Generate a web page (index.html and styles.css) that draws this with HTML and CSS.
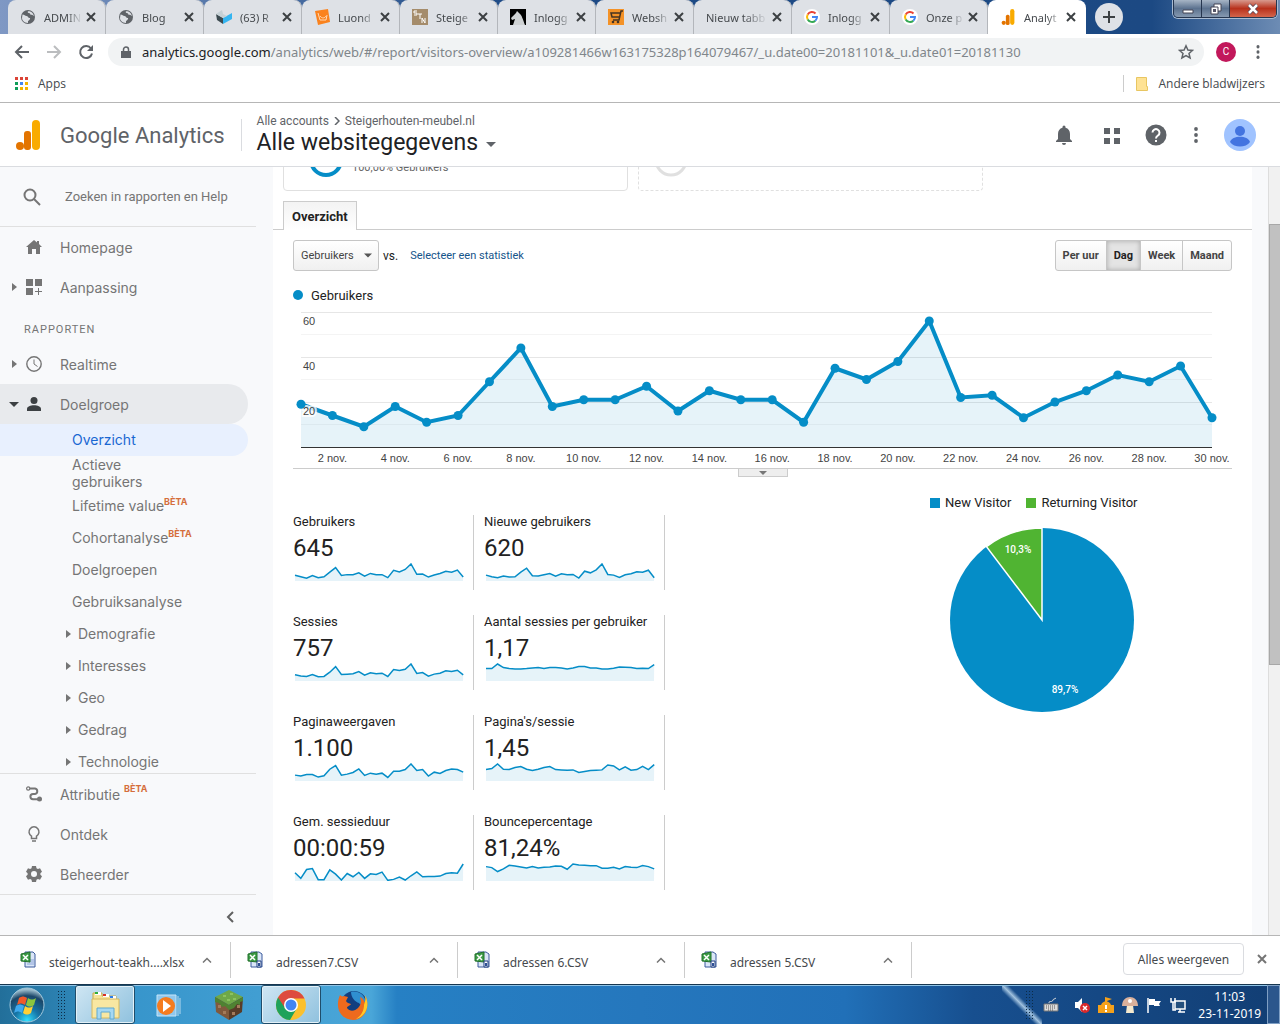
FILE: index.html
```html
<!DOCTYPE html>
<html lang="nl">
<head>
    <meta charset="UTF-8">
    <meta name="viewport" content="width=device-width, initial-scale=1.0">
    <title>Analytics</title>
    <link rel="stylesheet" href="styles.css">
</head>
<body>

    <!-- Shared icons -->
    <svg class="sprite" aria-hidden="true">
        <symbol id="close" viewBox="0 0 10 10"><path d="M1 1l8 8M9 1l-8 8" fill="none" stroke="currentColor" stroke-width="2"/></symbol>
        <symbol id="globe" viewBox="0 0 16 16"><circle cx="8" cy="8" r="7" fill="#5f6368"/><path d="M2.500 5.500c2 0 2.500 1.500 4 1.500s1.500 2 3 2-0 2.500-1.500 3v2c-4 0-6-3-6-5zM8 2.200c-1 1.300.5 1.800 1.500 2s.5 1.800 2 1.600 1.300 1.200 2.300 1.200c-.3-3-3-5-5.800-4.800z" fill="#dee1e6"/></symbol>
        <symbol id="google" viewBox="0 0 16 16"><circle cx="8" cy="8" r="8" fill="#fff"/><g fill="none" stroke-width="2"><path d="M11.500 4.500A5 5 0 0 0 3.700 5.500" stroke="#ea4335"/><path d="M3.700 5.500a5 5 0 0 0 0 5" stroke="#fbbc05"/><path d="M3.700 10.500a5 5 0 0 0 7.600 1.200" stroke="#34a853"/><path d="M11.300 11.700A5 5 0 0 0 13 8H8" stroke="#4285f4"/></g></symbol>
        <symbol id="analytics" viewBox="0 0 24 30"><rect x="16" y="0" width="8" height="30" rx="4" fill="#f9ab00"/><rect x="8" y="11" width="7" height="19" rx="3" fill="#e37400"/><circle cx="4" cy="26" r="4" fill="#e37400"/></symbol>
        <symbol id="right" viewBox="0 0 5 8"><path d="M0 0l5 4-5 4z" fill="currentColor"/></symbol>
        <symbol id="down" viewBox="0 0 10 5"><path d="M0 0h10l-5 5z" fill="currentColor"/></symbol>
        <symbol id="up" viewBox="0 0 10 6"><path d="M1 5.500l4-4 4 4" fill="none" stroke="currentColor" stroke-width="1.500"/></symbol>
        <symbol id="dots" viewBox="0 0 4 16"><circle cx="2" cy="2" r="1.900"/><circle cx="2" cy="8" r="1.900"/><circle cx="2" cy="14" r="1.900"/></symbol>
        <symbol id="excel" viewBox="0 0 16 18"><path d="M5 1h8l2 2v13H5z" fill="#dbe6f8" stroke="#3a5a9c"/><path d="M9 9h5M9 11h5M7 13h7" stroke="#8aa4d6"/><path d="M1 3l9-2v10l-9-1z" fill="#3d9c47" stroke="#23702c"/><path d="M3 4l5 5M8 4L3 9" stroke="#fff" stroke-width="1.500"/></symbol>
        <symbol id="csv" viewBox="0 0 16 18"><path d="M4 1h8l3 2v13H4z" fill="#dbe6f8" stroke="#3a5a9c"/><path d="M1 3l9-2v10l-9-1z" fill="#3d9c47" stroke="#23702c"/><path d="M3 4l5 5M8 4L3 9" stroke="#fff" stroke-width="1.500"/><path d="M10 10h4v6h-4z" fill="#fff" stroke="#1d3d80"/><path d="M11 12h2v3h-2z" fill="#2d4f94"/></symbol>
    </svg>

    <!-- Browser tabs -->
    <div class="tabstrip">
        <div class="tab"><svg class="favicon"><use href="#globe"/></svg><span class="tab-title">ADMIN</span><button class="tab-close" aria-label="Sluiten"><svg><use href="#close"/></svg></button></div>
        <div class="tab"><svg class="favicon"><use href="#globe"/></svg><span class="tab-title">Blog</span><button class="tab-close" aria-label="Sluiten"><svg><use href="#close"/></svg></button></div>
        <div class="tab"><svg class="favicon" viewBox="0 0 16 16"><path d="M0 5l7 4v6L1 11z" fill="#3c4a50"/><path d="M7 9l9-5v6l-9 5z" fill="#35b5f1"/><path d="M0 5l6-4 1 4 4 2-4 2z" fill="#c5d0d5"/></svg><span class="tab-title">(63) R</span><button class="tab-close" aria-label="Sluiten"><svg><use href="#close"/></svg></button></div>
        <div class="tab"><svg class="favicon" viewBox="0 0 16 16"><path d="M1 2l13-2 2 13-12 3z" fill="#fa821e"/><path d="M4 4l2 7h6l1-5M6 7c2 3 5 2 6 0" fill="none" stroke="#ffd9b5"/></svg><span class="tab-title">Luond</span><button class="tab-close" aria-label="Sluiten"><svg><use href="#close"/></svg></button></div>
        <div class="tab"><svg class="favicon" viewBox="0 0 16 16"><path d="M0 0h16v16H0z" fill="#a58c6b"/><path d="M5 2H2v2h3v2H2M6 5h4M8 5v5M10 14V9l3 5V9" fill="none" stroke="#fff"/></svg><span class="tab-title">Steige</span><button class="tab-close" aria-label="Sluiten"><svg><use href="#close"/></svg></button></div>
        <div class="tab"><svg class="favicon" viewBox="0 0 16 16"><path d="M0 0h16v16H0z" fill="#000"/><path d="M3 16l2-6-3 1-1-2 5-5 1-2 2 2c3 2 4 7 6 12z" fill="#cfd2d4"/></svg><span class="tab-title">Inlogg</span><button class="tab-close" aria-label="Sluiten"><svg><use href="#close"/></svg></button></div>
        <div class="tab"><svg class="favicon" viewBox="0 0 16 16"><path d="M0 0h16v16H0z" fill="#f49227"/><path d="M15 2h-2l-2 9H5M13 4H3l1 4h8" fill="none" stroke="#463322" stroke-width="1.500"/><circle cx="5" cy="13" r="1.300" fill="#463322"/><circle cx="10" cy="13" r="1.300" fill="#463322"/></svg><span class="tab-title">Websh</span><button class="tab-close" aria-label="Sluiten"><svg><use href="#close"/></svg></button></div>
        <div class="tab"><span class="tab-title">Nieuw tabb</span><button class="tab-close" aria-label="Sluiten"><svg><use href="#close"/></svg></button></div>
        <div class="tab"><svg class="favicon"><use href="#google"/></svg><span class="tab-title">Inlogg</span><button class="tab-close" aria-label="Sluiten"><svg><use href="#close"/></svg></button></div>
        <div class="tab"><svg class="favicon"><use href="#google"/></svg><span class="tab-title">Onze p</span><button class="tab-close" aria-label="Sluiten"><svg><use href="#close"/></svg></button></div>
        <div class="tab active"><svg class="favicon"><use href="#analytics"/></svg><span class="tab-title">Analyt</span><button class="tab-close" aria-label="Sluiten"><svg><use href="#close"/></svg></button></div>
        <button class="new-tab" aria-label="Nieuw tabblad"><svg viewBox="0 0 12 12"><path d="M6 0v12M0 6h12" stroke="#3c4043" stroke-width="2"/></svg></button>
        <div class="window-buttons">
            <button aria-label="Minimaliseren"><svg viewBox="0 0 12 12"><path d="M1 7h10v3H1z" fill="#fff" stroke="#445"/></svg></button>
            <button aria-label="Verkleinen"><svg viewBox="0 0 12 12"><path d="M4 1h7v7H4z" fill="#fff" stroke="#445"/><path d="M1 4h7v7H1z" fill="#fff" stroke="#445"/><path d="M3 6h3v3H3z" fill="#556"/></svg></button>
            <button class="window-close" aria-label="Venster sluiten"><svg viewBox="0 0 12 12"><path d="M2 2l8 8M10 2l-8 8" stroke="#545" stroke-width="4"/><path d="M2 2l8 8M10 2l-8 8" stroke="#fff" stroke-width="2.500"/></svg></button>
        </div>
    </div>

    <!-- Address bar -->
    <div class="toolbar">
        <button class="nav-button" aria-label="Terug"><svg viewBox="0 0 16 16"><path d="M15 8H2M8 2L2 8l6 6" fill="none" stroke="#5f6368" stroke-width="2"/></svg></button>
        <button class="nav-button" aria-label="Vooruit"><svg viewBox="0 0 16 16"><path d="M1 8h13M8 2l6 6-6 6" fill="none" stroke="#bbbdbf" stroke-width="2"/></svg></button>
        <button class="nav-button" aria-label="Vernieuwen"><svg viewBox="0 0 16 16"><path d="M13 4.500A6 6 0 1 0 14 9.500" fill="none" stroke="#5f6368" stroke-width="2"/><path d="M15 1v6H9z" fill="#5f6368"/></svg></button>
        <div class="omnibox">
            <svg class="lock" viewBox="0 0 10 12"><path d="M0 5h10v7H0z" fill="#5f6368"/><path d="M2.500 5V3.500a2.500 2.500 0 0 1 5 0V5" fill="none" stroke="#5f6368" stroke-width="1.500"/></svg>
            <span class="url"><b>analytics.google.com</b>/analytics/web/#/report/visitors-overview/a109281466w163175328p164079467/_u.date00=20181101&amp;_u.date01=20181130</span>
            <svg class="star" viewBox="0 0 16 16"><path d="M8 1.800l1.900 4.200 4.600.4-3.500 3 1.100 4.600L8 11.600 3.900 14 5 9.400 1.500 6.400l4.600-.4z" fill="none" stroke="#5f6368" stroke-width="1.500"/></svg>
        </div>
        <span class="profile">C</span>
        <button class="menu-button" aria-label="Menu"><svg viewBox="0 0 4 16"><use href="#dots"/></svg></button>
    </div>

    <div class="bookmarks">
        <svg class="apps" viewBox="0 0 13 13"><path d="M0 0h3v3H0zM5 0h3v3H5zM10 0h3v3h-3z" fill="#db4437"/><path d="M0 5h3v3H0zM0 10h3v3H0z" fill="#0f9d58"/><path d="M5 5h3v3H5z" fill="#4285f4"/><path d="M10 5h3v3h-3zM5 10h3v3H5zM10 10h3v3h-3z" fill="#f4b400"/></svg>
        <a href="#">Apps</a>
        <a class="other" href="#"><svg viewBox="0 0 12 14"><path d="M.5.500h10v9h1v4H.500z" fill="#fee294" stroke="#e8c662"/></svg>Andere bladwijzers</a>
    </div>

    <!-- Analytics header -->
    <header class="header">
        <svg class="logo"><use href="#analytics"/></svg>
        <span class="brand">Google Analytics</span>
        <span class="divider"></span>
        <div class="account">
            <div class="breadcrumb">Alle accounts <svg viewBox="0 0 6 8"><path d="M1 0l4 4-4 4" fill="none" stroke="#5f6368" stroke-width="1.500"/></svg> Steigerhouten-meubel.nl</div>
            <h1>Alle websitegegevens <svg><use href="#down"/></svg></h1>
        </div>
        <div class="header-icons">
            <svg class="bell" viewBox="0 0 24 24"><path d="M12 22a2 2 0 0 0 2-2h-4a2 2 0 0 0 2 2zm6-6v-5c0-3.100-1.600-5.600-4.500-6.300V4a1.500 1.500 0 0 0-3 0v.7C7.600 5.400 6 7.900 6 11v5l-2 2v1h16v-1z"/></svg>
            <svg viewBox="0 0 24 24"><path d="M4 5h6v6H4zM14 5h6v6h-6zM4 15h6v6H4zM14 15h6v6h-6z"/></svg>
            <svg viewBox="0 0 24 24"><circle cx="12" cy="12" r="10.500"/><path d="M8.500 9.500a3.500 3.500 0 1 1 5.500 3c-1.300 1-2 1.500-2 3" fill="none" stroke="#fff" stroke-width="2"/><path d="M11 17h2v2h-2z" fill="#fff"/></svg>
            <svg class="more" viewBox="-10 -4 24 24"><use href="#dots" width="4" height="16"/></svg>
            <svg class="avatar" viewBox="0 0 32 32"><circle cx="16" cy="16" r="16" fill="#a0c3ff"/><circle cx="16" cy="12" r="5" fill="#4374e0"/><path d="M6 23c2-7 18-7 20 0-4 6-16 6-20 0z" fill="#4374e0"/></svg>
        </div>
    </header>

    <div class="layout">
        <aside class="sidebar">
            <label class="search">
                <svg viewBox="0 0 18 18"><circle cx="7" cy="7" r="5.500" fill="none" stroke="#757575" stroke-width="2"/><path d="M11 11l6 6" stroke="#757575" stroke-width="2"/></svg>
                <input type="text" placeholder="Zoeken in rapporten en Help" aria-label="Zoeken">
            </label>
            <nav class="nav">
                <a class="item" href="#"><span class="arrow"></span><svg viewBox="0 0 16 16"><path d="M8 1L0 8h2v7h4v-5h4v5h4V8h2l-3-3V2h-2v1.500z"/></svg>Homepage</a>
                <a class="item" href="#"><span class="arrow"><svg><use href="#right"/></svg></span><svg viewBox="0 0 16 16"><path d="M0 0h7v7H0zM9 0h7v7H9zM0 9h7v7H0zM12 9h1v3h3v1h-3v3h-1v-3H9v-1h3z"/></svg>Aanpassing</a>
                <h2>RAPPORTEN</h2>
                <a class="item" href="#"><span class="arrow"><svg><use href="#right"/></svg></span><svg viewBox="0 0 16 16"><circle cx="8" cy="8" r="7.200" fill="none" stroke="currentColor" stroke-width="1.400"/><path d="M8 3.500V8l3.500 2.500" fill="none" stroke="currentColor"/></svg>Realtime</a>
                <a class="item open" href="#"><span class="arrow"><svg class="wide"><use href="#down"/></svg></span><svg viewBox="0 0 16 16"><circle cx="8" cy="4.500" r="3.500"/><path d="M1 15v-2c0-5 14-5 14 0v2z"/></svg><span>Doelgroep</span></a>
                <a class="sub selected" href="#">Overzicht</a>
                <a class="sub tall" href="#">Actieve gebruikers</a>
                <a class="sub" href="#">Lifetime value<sup>BÈTA</sup></a>
                <a class="sub" href="#">Cohortanalyse<sup>BÈTA</sup></a>
                <a class="sub" href="#">Doelgroepen</a>
                <a class="sub" href="#">Gebruiksanalyse</a>
                <a class="sub group" href="#"><svg><use href="#right"/></svg>Demografie</a>
                <a class="sub group" href="#"><svg><use href="#right"/></svg>Interesses</a>
                <a class="sub group" href="#"><svg><use href="#right"/></svg>Geo</a>
                <a class="sub group" href="#"><svg><use href="#right"/></svg>Gedrag</a>
                <a class="sub group" href="#"><svg><use href="#right"/></svg>Technologie</a>
            </nav>
            <div class="nav-bottom">
                <a class="item" href="#"><span class="arrow"></span><svg viewBox="0 0 16 16"><path d="M4 2.500h5a2.800 2.800 0 0 1 0 5.500H7a2.600 2.600 0 0 0 0 5.200h5" fill="none" stroke="currentColor" stroke-width="2"/><circle cx="2.200" cy="2.500" r="1.600" fill="none" stroke="currentColor" stroke-width="1.200"/><circle cx="13.500" cy="13" r="2.500"/></svg>Attributie&nbsp;<sup>BÈTA</sup></a>
                <a class="item" href="#"><span class="arrow"></span><svg viewBox="0 0 16 16"><path d="M5.500 12.500v-2.300a5 5 0 1 1 5 0v2.300z" fill="none" stroke="currentColor" stroke-width="1.500"/><path d="M6 15h4" stroke="currentColor" stroke-width="1.500"/></svg>Ontdek</a>
                <a class="item" href="#"><span class="arrow"></span><svg viewBox="0 0 16 16"><path fill-rule="evenodd" d="M6 0h4l.5 2.200 1.400.8 2.100-.7 2 3.400L14.400 7.200v1.600L16 10.300l-2 3.400-2.100-.7-1.400.8L10 16H6l-.5-2.200-1.400-.8-2.100.7-2-3.400 1.600-1.500V7.200L0 5.700l2-3.400 2.100.7 1.400-.8zM8 5a3 3 0 1 0 0 6 3 3 0 0 0 0-6z"/></svg>Beheerder</a>
            </div>
            <button class="collapse" aria-label="Inklappen"><svg viewBox="0 0 8 12"><path d="M7 1L2 6l5 5" fill="none" stroke="#616161" stroke-width="2"/></svg></button>
        </aside>

        <main class="report">
            <div class="segments">
                <div class="segment"><svg viewBox="0 0 36 36"><circle cx="18" cy="18" r="15" fill="none" stroke="#058dc7" stroke-width="4"/></svg>100,00% Gebruikers</div>
                <div class="segment empty"><svg viewBox="0 0 36 36"><circle cx="18" cy="18" r="15" fill="none" stroke="#e0e0e0" stroke-width="3"/></svg></div>
            </div>

            <div class="report-tabs"><button>Overzicht</button></div>

            <div class="content">
                <div class="controls">
                    <span class="select"><select aria-label="Statistiek"><option>Gebruikers</option></select><svg><use href="#down"/></svg></span>
                    <span>vs.</span>
                    <a href="#">Selecteer een statistiek</a>
                    <div class="range">
                        <button>Per uur</button><button class="on">Dag</button><button>Week</button><button>Maand</button>
                    </div>
                </div>

                <div class="legend"><i></i>Gebruikers</div>
                <svg class="chart" id="chart" viewBox="0 0 939 156"></svg>
                <div class="chart-foot"><button aria-label="Notities"><svg><use href="#down"/></svg></button></div>

                <div class="summary">
                    <div class="metrics" id="metrics"></div>
                    <figure class="visitors">
                        <figcaption><i></i>New Visitor <i class="green"></i>Returning Visitor</figcaption>
                        <svg viewBox="0 0 184 184">
                            <circle cx="92" cy="92" r="92" fill="#058dc7"/>
                            <path d="M92 92V0A92 92 0 0 0 36.500 18.600z" fill="#50b432" stroke="#fff" stroke-width="1.500"/>
                            <text x="68" y="25">10,3%</text>
                            <text x="115" y="165">89,7%</text>
                        </svg>
                    </figure>
                </div>
            </div>
        </main>

        <div class="scrollbar"><div class="thumb"></div></div>
    </div>

    <!-- Downloads -->
    <div class="downloads">
        <div class="download"><svg class="file"><use href="#excel"/></svg><span>steigerhout-teakh....xlsx</span><button aria-label="Opties"><svg><use href="#up"/></svg></button></div>
        <div class="download"><svg class="file"><use href="#csv"/></svg><span>adressen7.CSV</span><button aria-label="Opties"><svg><use href="#up"/></svg></button></div>
        <div class="download"><svg class="file"><use href="#csv"/></svg><span>adressen 6.CSV</span><button aria-label="Opties"><svg><use href="#up"/></svg></button></div>
        <div class="download"><svg class="file"><use href="#csv"/></svg><span>adressen 5.CSV</span><button aria-label="Opties"><svg><use href="#up"/></svg></button></div>
        <button class="show-all">Alles weergeven</button>
        <button class="close-bar" aria-label="Sluiten"><svg><use href="#close"/></svg></button>
    </div>

    <!-- Taskbar -->
    <div class="taskbar">
        <button class="start" aria-label="Start"><svg viewBox="0 0 38 38">
            <defs><radialGradient id="orb" cx=".5" cy=".95" r=".9"><stop offset="0" stop-color="#2fe0ff"/><stop offset=".4" stop-color="#1676a8"/><stop offset=".8" stop-color="#1b4668"/><stop offset="1" stop-color="#9bbccc"/></radialGradient></defs>
            <circle cx="19" cy="19" r="17" fill="url(#orb)" stroke="#a4c9dc"/>
            <path d="M11 12c3-2 5-2 8 0l-2 7c-3-2-5-2-8 0z" fill="#f0592a"/><path d="M20 12c3 2 5 2 8 0l-2 7c-3 2-5 2-8 0z" fill="#8cc63e"/><path d="M8 20c3-2 5-2 8 0l-2 7c-3-2-5-2-8 0z" fill="#3fa9ee"/><path d="M17 20c3 2 5 2 8 0l-2 7c-3 2-5 2-8 0z" fill="#ffd034"/></svg></button>
        <span class="grip"></span>
        <button class="task open" aria-label="Verkenner"><svg viewBox="0 0 32 32"><path d="M4 4h9v3h14v20H4z" fill="#f5e39a" stroke="#c9a94a"/><path d="M6 3h6v3H6zM14 5h6v3h-6zM21 7h6v3h-6z" fill="#fff"/><path d="M6 3h3v2H6z" fill="#2fae3b"/><path d="M14 5h3v2h-3z" fill="#d93025"/><path d="M21 7h3v2h-3z" fill="#2b7de9"/><path d="M3 10h27v19H3z" fill="#f8e7a2" stroke="#d6b85c"/><path d="M8 30V19h17v11h-4v-7h-9v7z" fill="#a5d8f2" stroke="#5fa9d2"/></svg></button>
        <button class="task" aria-label="Media Player"><svg viewBox="0 0 32 32"><path d="M6 6h19v21H6z" fill="#8fc8ee" stroke="#c7e5f8"/><path d="M27 7v20M29 9v16" stroke="#b5d9f0"/><circle cx="15" cy="17" r="9" fill="#f57c1f"/><path d="M12 11l8 6-8 6z" fill="#fff"/></svg></button>
        <button class="task" aria-label="Minecraft"><svg viewBox="0 0 32 32"><path d="M16 1l14 7-14 8L2 8z" fill="#6fa848"/><path d="M2 8l14 8v15L3 23z" fill="#80593d"/><path d="M30 8l-14 8v15l13-8z" fill="#593c28"/><path d="M2 8l14 8 14-8v4l-3 1v3l-3-1-3 4-5 2-4-4-3 1-3-4-4-1z" fill="#4f8232"/><path d="M5 16h3v3H5zM10 22h3v3h-3zM19 23h3v3h-3zM24 16h3v3h-3z" fill="#a37b5b"/><path d="M10 6h3v2h-3zM17 4h3v2h-3zM20 9h3v2h-3zM14 10h3v2h-3z" fill="#8cc35f"/></svg></button>
        <button class="task open" aria-label="Chrome"><svg viewBox="0 0 32 32"><circle cx="16" cy="16" r="15" fill="#fbc02d"/><path d="M16 16L3 8.500A15 15 0 0 0 15 31l7-12z" fill="#1fa25b"/><path d="M3 8.500A15 15 0 0 1 29.500 9.500H16L10 19z" fill="#dd4b3e"/><circle cx="16" cy="16" r="7" fill="#fff"/><circle cx="16" cy="16" r="5.500" fill="#4285f4"/></svg></button>
        <button class="task" aria-label="Firefox"><svg viewBox="0 0 32 32"><circle cx="17" cy="15" r="13" fill="#123f80"/><path d="M14 3c8-2 15 4 15 12-2 3-5 2-7-1-4-1-8-6-8-11z" fill="#2f8fd0"/><path d="M3 6c1 1 2 2 4 1l4 1-2 4c1 2 3 2 5 3-1 2-4 2-4 4 3 4 8 3 11 0 4-4 3-8 2-11 3 1 4 4 5 6 1-3 1-5 0-8 6 11 0 25-12 25C2 30-2 17 3 6z" fill="#ee6a1d"/><path d="M28 6c5 9 2 21-9 24 5-3 8-8 8-14 1-3 2-6 1-10z" fill="#ffc928"/></svg></button>
        <div class="tray">
            <span class="grip"></span>
            <svg class="keyboard" viewBox="0 0 16 16"><path d="M1 7h14v7H1z" fill="#ddd" stroke="#777"/><path d="M3 9h10M3 11h10M5 13h6" stroke="#555" stroke-dasharray="1 1"/><path d="M6 6c0-3 3 0 4-3 0-1 2-1 3-2" fill="none" stroke="#ddd"/></svg>
            <svg viewBox="0 0 16 16"><path d="M1 5h3l4-4v14l-4-4H1z" fill="#fff"/><circle cx="11" cy="11" r="5" fill="#d9292b"/><path d="M9 9l4 4M13 9l-4 4" stroke="#fff" stroke-width="1.500"/></svg>
            <svg viewBox="0 0 16 16"><path d="M0 8h16v8H0zM3 8c2-5 8-5 10 0M7 5V0l7 2-5 2v2z" fill="#f5a11b"/><path d="M7 8h2v4H7zM7 13h2v2H7z" fill="#fff"/></svg>
            <svg viewBox="0 0 16 16"><path d="M5 8h6l1 8H4z" fill="#f5e9ce"/><path d="M0 9C0-3 16-3 16 9z" fill="#d9b09b"/><circle cx="8" cy="4" r="2" fill="#fff"/></svg>
            <svg viewBox="0 0 16 16"><path d="M2 1v15" stroke="#fff" stroke-width="1.500"/><path d="M3 2h6v2h6l-2 3 1 2H8V8H3z" fill="#fff"/></svg>
            <svg viewBox="0 0 16 16"><path d="M5 4h10v8H5zM8 15h7M10 12v3" fill="#24507e" stroke="#fff" stroke-width="1.500"/><path d="M1 1v4h4V1M3 5v8h3" fill="none" stroke="#fff" stroke-width="1.500"/></svg>
            <div class="clock">11:03<br>23-11-2019</div>
            <button class="desktop" aria-label="Bureaublad"></button>
        </div>
    </div>

    <script src="charts.js"></script>
</body>
</html>
```
FILE: styles.css
```css
* {
    box-sizing: border-box;
}
body {
    margin: 0;
    height: 100vh;
    display: flex;
    flex-direction: column;
    overflow: hidden;
    background: #fff;
    font-family: Roboto, "Liberation Sans", sans-serif;
    font-size: 13px;
    color: #222;
}
button {
    font: inherit;
    color: inherit;
    padding: 0;
    border: none;
    background: none;
}
a {
    color: inherit;
    text-decoration: none;
}
svg {
    flex: none;
}
.sprite {
    display: none;
}

/* Browser */
.tabstrip {
    display: flex;
    align-items: stretch;
    flex: none;
    height: 34px;
    padding-left: 8px;
    background: linear-gradient(90deg, #7f98c4, #1d4a86 40%, #1c4983 90%, #6d8cb4);
    font: 11px "Noto Sans", "Open Sans", sans-serif;
}
.tab {
    display: flex;
    align-items: center;
    flex: 0 1 98px;
    min-width: 0;
    padding: 0 10px 0 12px;
    background: #dee1e6;
    border-radius: 8px 8px 0 0;
    box-shadow: inset -1px 0 #b3b6bb;
}
.tab.active {
    background: #fff;
    box-shadow: none;
}
.favicon {
    width: 16px;
    height: 16px;
    margin-right: 8px;
}
.tab-title {
    flex: 1;
    min-width: 0;
    overflow: hidden;
    white-space: nowrap;
    color: #45494d;
    -webkit-mask-image: linear-gradient(90deg, #000 60%, transparent);
    mask-image: linear-gradient(90deg, #000 60%, transparent);
}
.tab-close {
    display: flex;
    margin-left: 4px;
    color: #3c4043;
}
.tab-close svg {
    width: 10px;
    height: 10px;
}
.new-tab {
    width: 28px;
    height: 28px;
    margin: 3px 0 0 9px;
    border-radius: 50%;
    background: #dee1e6;
}
.new-tab svg {
    display: block;
    width: 12px;
    margin: 0 auto;
}
.window-buttons {
    display: flex;
    height: 18px;
    margin: 0 3px 0 auto;
    border: 1px solid #26364f;
    border-top: none;
    border-radius: 0 0 5px 5px;
    overflow: hidden;
    box-shadow: 0 0 0 1px #a9bbd2;
}
.window-buttons button {
    width: 28px;
    border-right: 1px solid #26364f;
    background: linear-gradient(#a7b5c6, #5c728f 50%, #8699b0);
}
.window-buttons .window-close {
    width: 46px;
    border: none;
    background: linear-gradient(#d89a8e, #b8311c 50%, #d4654b);
}
.window-buttons svg {
    display: block;
    width: 12px;
    margin: 0 auto;
}
.toolbar {
    display: flex;
    align-items: center;
    flex: none;
    height: 36px;
    padding: 0 14px;
}
.nav-button {
    width: 16px;
    height: 16px;
    margin-right: 16px;
}
.nav-button svg {
    display: block;
}
.omnibox {
    display: flex;
    align-items: center;
    flex: 1;
    min-width: 0;
    height: 28px;
    margin-left: -2px;
    padding: 0 10px 0 13px;
    border-radius: 14px;
    background: #f1f3f4;
}
.lock {
    width: 10px;
    height: 12px;
    margin-right: 11px;
}
.url {
    flex: 1;
    min-width: 0;
    overflow: hidden;
    white-space: nowrap;
    font: 13px "Noto Sans", "Open Sans", sans-serif;
    color: #80868b;
}
.url b {
    font-weight: normal;
    color: #202124;
}
.star {
    width: 16px;
}
.profile {
    width: 20px;
    margin: 0 20px 0 12px;
    border-radius: 50%;
    background: #c2185b;
    color: #fff;
    font-size: 10px;
    line-height: 20px;
    text-align: center;
}
.menu-button svg {
    display: block;
    width: 4px;
    height: 14px;
    margin-right: 6px;
    fill: #5f6368;
}
.bookmarks {
    display: flex;
    align-items: center;
    flex: none;
    height: 33px;
    padding: 0 15px 5px;
    border-bottom: 1px solid #b6b6b6;
    font: 12px "Open Sans", "Noto Sans", sans-serif;
    color: #45494d;
}
.apps {
    width: 13px;
    margin-right: 10px;
}
.bookmarks .other {
    display: flex;
    align-items: center;
    margin-left: auto;
    padding-left: 12px;
    border-left: 1px solid #ccc;
}
.other svg {
    width: 12px;
    margin-right: 10px;
}

/* Analytics header */
.header {
    display: flex;
    align-items: center;
    flex: none;
    height: 64px;
    padding: 0 24px 0 15px;
    border-bottom: 1px solid #dadce0;
}
.logo {
    width: 26px;
    height: 30px;
}
.brand {
    margin: 2px 16px 0 19px;
    font-size: 22px;
    color: #5f6368;
}
.divider {
    width: 1px;
    height: 32px;
    margin-right: 15px;
    background: #dadce0;
}
.breadcrumb {
    font-size: 12px;
    line-height: 16px;
    color: #5f6368;
}
.breadcrumb svg {
    width: 6px;
    height: 8px;
    margin: 0 2px;
}
.account h1 {
    margin: 0;
    font-size: 23px;
    font-weight: normal;
    line-height: 28px;
    color: #202124;
}
.account h1 svg {
    width: 10px;
    height: 5px;
    margin: 0 0 3px 2px;
    color: #5f6368;
}
.header-icons {
    display: flex;
    align-items: center;
    gap: 20px;
    margin-left: auto;
    fill: #5f6368;
}
.header-icons svg {
    width: 24px;
    height: 24px;
}
.header-icons .bell {
    margin-right: 4px;
}
.header-icons .more {
    margin-left: -4px;
}
.header-icons .avatar {
    width: 32px;
    height: 32px;
    margin-left: -4px;
}

/* Sidebar */
.layout {
    display: flex;
    flex: 1;
    min-height: 0;
    background: #f8f9fb;
}
.sidebar {
    display: flex;
    flex-direction: column;
    flex: none;
    width: 273px;
    padding-right: 17px;
    font: 14px Inter, Roboto, sans-serif;
    color: #757575;
}
.search {
    display: flex;
    align-items: center;
    flex: none;
    height: 60px;
    padding-left: 23px;
    border-bottom: 1px solid #e0e0e0;
}
.search svg {
    width: 18px;
    margin-right: 24px;
}
.search input {
    width: 164px;
    padding: 0;
    border: none;
    background: none;
    font: 13px Roboto, sans-serif;
}
.search input::placeholder {
    color: #757575;
}
.nav {
    flex: 1;
    min-height: 0;
    overflow: hidden;
}
.item {
    display: flex;
    align-items: center;
    height: 40px;
    margin-right: 8px;
    fill: currentColor;
}
.item > svg {
    width: 16px;
    height: 16px;
    margin-right: 18px;
}
.arrow {
    display: flex;
    width: 26px;
    padding-left: 12px;
}
.arrow svg {
    width: 5px;
    height: 8px;
}
.arrow .wide {
    width: 10px;
    height: 5px;
    margin-left: -3px;
}
.nav h2 {
    height: 37px;
    margin: 0;
    padding: 4px 0 0 24px;
    font: 11px/37px Roboto, sans-serif;
    letter-spacing: 1px;
}
.item.open {
    border-radius: 0 20px 20px 0;
    background: #e8eaed;
    color: #3c4043;
}
.item.open > span:last-child {
    color: #757575;
}
.sub {
    display: block;
    margin-right: 8px;
    padding-left: 72px;
    line-height: 32px;
    height: 32px;
}
.sub.selected {
    border-radius: 0 16px 16px 0;
    background: #e8f0fe;
    color: #1967d2;
}
.sub.tall {
    height: 34px;
    padding-right: 80px;
    line-height: 17px;
}
.sub.group {
    padding-left: 66px;
}
.sub svg {
    width: 5px;
    height: 8px;
    margin: 0 7px 1px 0;
}
sup {
    font-size: 9px;
    font-weight: bold;
    line-height: 0;
    color: #d56e3c;
}
.item sup {
    margin-bottom: 10px;
}
.nav-bottom {
    border-top: 1px solid #e0e0e0;
    border-bottom: 1px solid #e0e0e0;
}
.collapse {
    flex: none;
    height: 40px;
    padding-right: 22px;
    text-align: right;
}
.collapse svg {
    width: 8px;
    height: 12px;
    vertical-align: middle;
}

/* Report */
.report {
    flex: 1;
    min-width: 0;
    overflow: hidden;
    margin-right: 16px;
    background: #fff;
}
.segments {
    display: flex;
    align-items: flex-end;
    gap: 10px;
    height: 24px;
    padding-left: 10px;
    overflow: hidden;
}
.segment {
    display: flex;
    width: 345px;
    height: 80px;
    padding: 30px 24px 0;
    border: 1px solid #e0e0e0;
    border-radius: 4px;
    font-size: 11px;
    line-height: 52px;
    color: #666;
}
.segment svg {
    width: 36px;
    height: 36px;
    margin-right: 8px;
}
.segment.empty {
    border-style: dashed;
    padding-left: 14px;
}
.report-tabs {
    display: flex;
    height: 39px;
    padding: 10px 10px 0;
    border-bottom: 1px solid #ccc;
}
.report-tabs button {
    height: 29px;
    padding: 0 8px;
    border: 1px solid #ccc;
    border-bottom: none;
    background: linear-gradient(#f3f3f3, #fff);
    font-weight: bold;
}
.content {
    padding: 10px 20px;
}
.controls {
    display: flex;
    align-items: center;
    height: 31px;
    font-size: 12px;
}
.select {
    display: flex;
    align-items: center;
    width: 86px;
    height: 31px;
    margin-right: 4px;
    border: 1px solid #c6c6c6;
    border-radius: 3px;
    background: linear-gradient(#fff, #f0f0f0);
}
.select select {
    appearance: none;
    flex: 1;
    min-width: 0;
    padding: 0 0 0 7px;
    border: none;
    background: none;
    font: 11px Roboto, sans-serif;
    color: #444;
}
.select svg {
    width: 8px;
    height: 5px;
    margin-right: 6px;
    color: #555;
}
.controls a {
    margin-left: 12px;
    font-size: 11px;
    color: #15548a;
}
.range {
    display: flex;
    margin-left: auto;
    border: 1px solid #c6c6c6;
    border-radius: 3px;
    background: linear-gradient(#fff, #f0f0f0);
}
.range button {
    height: 29px;
    padding: 0 7px;
    font-size: 11px;
    font-weight: bold;
    color: #444;
}
.range button + button {
    border-left: 1px solid #c6c6c6;
}
.range .on {
    background: #e4e4e4;
    box-shadow: inset 0 0 5px #aaa;
    color: #222;
}
.legend {
    display: flex;
    align-items: center;
    height: 41px;
    padding-top: 7px;
}
.legend i {
    width: 10px;
    height: 10px;
    margin-right: 8px;
    border-radius: 50%;
    background: #058dc7;
}
.chart {
    display: block;
    width: 100%;
    overflow: visible;
}
.chart text {
    font: 11px "Liberation Sans", sans-serif;
    fill: #444;
}
.chart .y-label {
    stroke: #fff;
    stroke-width: 4px;
    stroke-opacity: .8;
    paint-order: stroke;
}
.chart-foot {
    border-top: 1px solid #ccc;
    text-align: center;
    height: 30px;
}
.chart-foot button {
    display: inline-block;
    width: 50px;
    height: 8px;
    border: 1px solid #ccc;
    border-top: none;
    background: #eee;
    vertical-align: top;
}
.chart-foot svg {
    display: block;
    width: 8px;
    height: 4px;
    margin: 0 auto;
    color: #777;
}
.summary {
    display: flex;
    justify-content: space-between;
    align-items: flex-start;
}
.metrics {
    display: grid;
    grid-template-columns: 181px 181px;
    gap: 25px 10px;
    padding-top: 17px;
}
.metric {
    height: 75px;
    border-right: 1px solid #ccc;
    line-height: 14px;
}
.metric b {
    display: block;
    margin-top: 4px;
    font-size: 24px;
    font-weight: normal;
    line-height: 30px;
}
.metric svg {
    display: block;
    width: 172px;
    height: 18px;
}
.visitors {
    flex: none;
    width: 302px;
    margin: 0;
}
.visitors figcaption {
    display: flex;
    align-items: center;
    height: 9px;
    margin-bottom: 21px;
}
.visitors i {
    width: 10px;
    height: 10px;
    margin-right: 5px;
    background: #058dc7;
}
.visitors .green {
    margin-left: 15px;
    background: #50b432;
}
.visitors svg {
    width: 184px;
    margin-left: 20px;
}
.visitors text {
    font: 500 10px Roboto, sans-serif;
    fill: #fff;
    text-anchor: middle;
}
.scrollbar {
    width: 12px;
    padding-top: 57px;
    border-left: 1px solid #ddd;
    background: #f1f1f1;
}
.thumb {
    height: 62%;
    border: 1px solid #a8a8a8;
    border-width: 1px 0 1px 1px;
    background: #c1c1c1;
}

/* Downloads */
.downloads {
    display: flex;
    align-items: center;
    flex: none;
    height: 49px;
    padding-left: 4px;
    border-top: 1px solid #b6b6b6;
    background: #fff;
    font: 12px "Noto Sans", "Open Sans", sans-serif;
    color: #45494d;
}
.download {
    display: flex;
    align-items: center;
    width: 227px;
    height: 36px;
    padding: 0 18px 0 16px;
    border-right: 1px solid #ccc;
}
.file {
    width: 16px;
    height: 18px;
    margin-right: 13px;
}
.download span {
    flex: 1;
    padding-top: 4px;
    white-space: nowrap;
}
.download button,
.close-bar {
    display: flex;
    color: #757575;
}
.download button svg {
    width: 10px;
    height: 6px;
}
.show-all {
    width: 121px;
    height: 32px;
    margin: 0 0 2px auto;
    border: 1px solid #dadce0;
    border-radius: 4px;
}
.close-bar {
    margin: 0 13px 2px;
}
.close-bar svg {
    width: 10px;
    height: 10px;
}

/* Taskbar */
.taskbar {
    display: flex;
    flex: none;
    height: 40px;
    border-top: 1px solid #17364f;
    background:
        linear-gradient(45deg, transparent 42%, #9fc0dd 50%, transparent 58%) right 238px top / 40px 40px no-repeat,
        linear-gradient(90deg, #226f9a, #3795cb 10%, #4aa6d8 29%, #2680c4 31%, #2577bd 50%, #2170b8 66%, #174f8f 76%, #123e74);
    box-shadow: inset 0 1px #8fc3e6;
}
.start {
    width: 38px;
    margin: 0 9px 0 8px;
}
.start svg {
    display: block;
    width: 38px;
    height: 38px;
}
.grip {
    width: 9px;
    margin: 5px 9px 3px 2px;
    background: radial-gradient(circle, #0c2c47 1px, transparent 1px) 0 0 / 3px 3px;
}
.task {
    width: 60px;
    margin: 0 2px 0 0;
    border-radius: 3px;
}
.task.open {
    border: 1px solid #1f4d6b;
    background: linear-gradient(135deg, #cfe6f3, #8fc1de);
    box-shadow: inset 0 0 0 1px #e3f1f8;
}
.task svg {
    display: block;
    width: 32px;
    height: 32px;
    margin: 0 auto;
}
.tray {
    display: flex;
    align-items: center;
    margin-left: auto;
}
.tray .grip {
    align-self: stretch;
}
.tray svg {
    width: 16px;
    height: 16px;
    margin-right: 8px;
}
.tray .keyboard {
    margin-right: 15px;
}
.clock {
    margin: 0 6px 0 4px;
    font: 12px/17px "Noto Sans", "Open Sans", sans-serif;
    color: #fff;
    text-align: center;
}
.desktop {
    align-self: stretch;
    width: 13px;
    border: 1px solid #7f9fc4;
    background: #2b568c;
}
```
FILE: charts.js
```javascript
const users = [19, 14, 9, 18, 11, 14, 29, 44, 18, 21, 21, 27, 16, 25, 21, 21, 11, 35, 30, 38, 56, 22, 23, 13, 20, 25, 32, 29, 36, 13];

const metrics = [
    ['Gebruikers', '645', users],
    ['Nieuwe gebruikers', '620', [18, 13, 10, 15, 12, 13, 27, 39, 16, 15, 19, 23, 15, 22, 19, 20, 9, 30, 25, 34, 52, 20, 18, 11, 19, 22, 28, 27, 33, 10]],
    ['Sessies', '757', [19, 15, 14, 20, 13, 14, 27, 44, 20, 21, 22, 29, 18, 25, 22, 24, 14, 35, 32, 36, 52, 23, 26, 15, 21, 24, 31, 29, 33, 19]],
    ['Aantal sessies per gebruiker', '1,17', [38, 38, 52, 41, 38, 37, 37, 38, 40, 41, 38, 41, 41, 40, 37, 40, 44, 44, 40, 40, 37, 37, 39, 43, 42, 41, 38, 39, 38, 50]],
    ['Paginaweergaven', '1.100', [18, 15, 20, 20, 12, 16, 36, 47, 18, 21, 26, 37, 17, 24, 21, 24, 11, 30, 30, 35, 52, 32, 35, 15, 27, 23, 32, 37, 35, 27]],
    ["Pagina's/sessie", '1,45', [35, 38, 52, 36, 35, 41, 44, 36, 32, 36, 41, 44, 35, 34, 33, 34, 26, 29, 32, 33, 34, 49, 46, 34, 43, 33, 35, 45, 35, 50]],
    ['Gem. sessieduur', '00:00:59', [25, 8, 35, 38, 4, 4, 34, 21, 3, 23, 13, 26, 8, 22, 20, 27, 2, 5, 12, 3, 16, 28, 13, 14, 14, 15, 23, 25, 24, 52]],
    ['Bouncepercentage', '81,24%', [44, 41, 29, 37, 48, 46, 43, 40, 44, 40, 42, 43, 46, 45, 36, 52, 49, 48, 47, 47, 39, 39, 42, 37, 44, 42, 41, 47, 44, 37]]
];

function drawChart() {
    const left = 8, base = 135, step = 911 / 29, scale = 2.25;
    const points = users.map((v, i) => [left + i * step, base - v * scale]);
    const line = points.map(p => p.join()).join(' ');
    let svg = '';

    for (let v = 10; v <= 60; v += 10) {
        const y = base - Math.round(v * scale) + 0.5;
        svg += `<path d="M${left} ${y}h911" stroke="${v % 20 ? '#f4f4f4' : '#e6e6e6'}"/>`;
    }
    svg += `<polygon points="${left},${base} ${line} 919,${base}" fill="#058dc7" fill-opacity=".1"/>`;
    svg += `<polyline points="${line}" fill="none" stroke="#058dc7" stroke-width="4"/>`;
    svg += `<path d="M${left} ${base + 0.5}h911" stroke="#333"/>`;
    for (const v of [20, 40, 60]) {
        svg += `<text class="y-label" x="10" y="${base - v * scale + 13}">${v}</text>`;
    }
    points.forEach(([x, y], i) => {
        svg += `<circle cx="${x}" cy="${y}" r="4.500" fill="#058dc7"/>`;
        if (i % 2) {
            svg += `<text x="${x}" y="150" text-anchor="middle">${i + 1} nov.</text>`;
        }
    });
    document.getElementById('chart').innerHTML = svg;
}

function sparkline(values) {
    const max = Math.max(...values);
    const line = values.map((v, i) => `${2 + i * 5.8},${18 - v / max * 17}`).join(' ');
    return `<svg viewBox="0 0 172 18">
        <polygon points="2,18 ${line} 170,18" fill="#058dc7" fill-opacity=".1"/>
        <polyline points="${line}" fill="none" stroke="#058dc7" stroke-width="1.500"/>
    </svg>`;
}

drawChart();
document.getElementById('metrics').innerHTML = metrics.map(([name, value, values]) =>
    `<div class="metric">${name}<b>${value}</b>${sparkline(values)}</div>`
).join('');
```
